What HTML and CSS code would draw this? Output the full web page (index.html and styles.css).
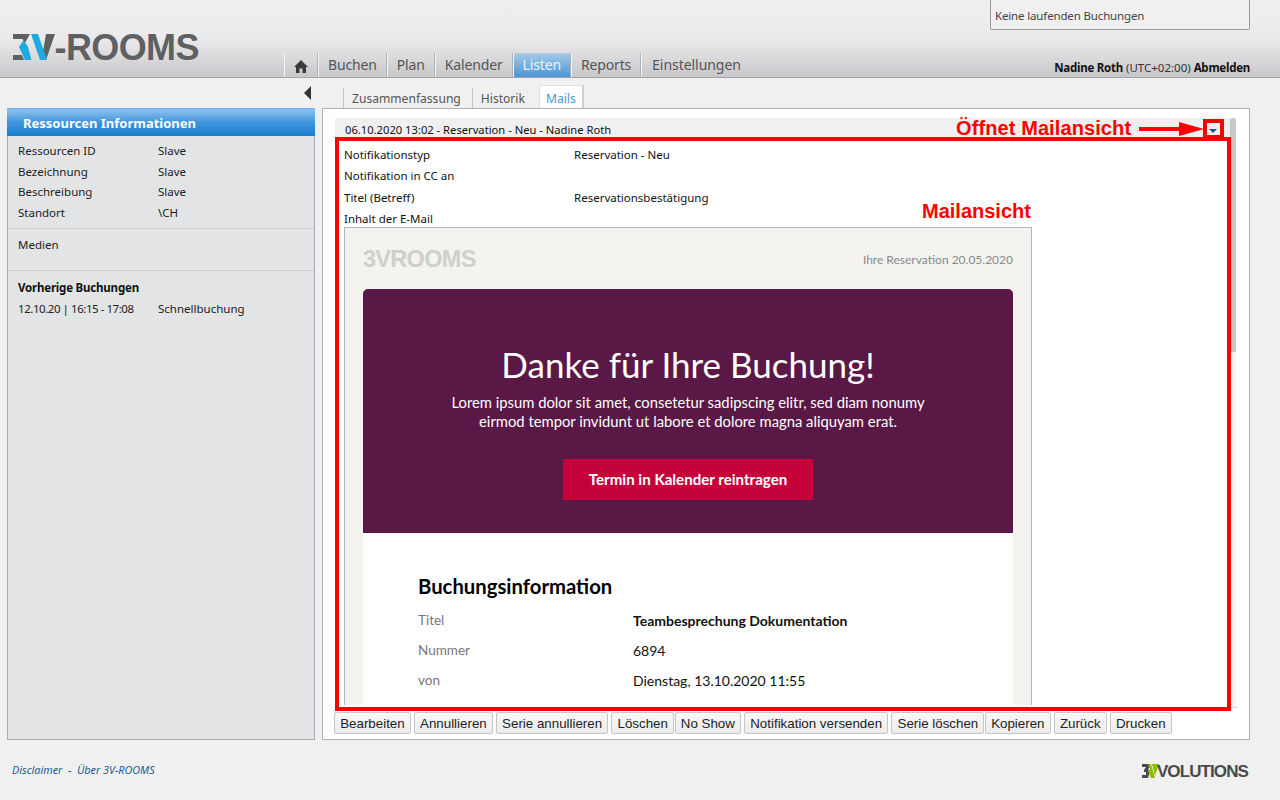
FILE: index.html
```html
<!DOCTYPE html>
<html lang="de">
<head>
    <meta charset="UTF-8">
    <title>3V-ROOMS</title>
    <link rel="stylesheet" href="styles.css">
</head>
<body>
<div class="header">
    <div class="running">Keine laufenden Buchungen</div>
    <div class="logo">
        <svg class="logo-mark" width="42" height="26" viewBox="0 0 42 26">
            <polygon points="0,0 17,0 12,9 9.5,5 0,5" fill="#5f6062"/>
            <polygon points="0,21 9,21 11,26 0,26" fill="#5f6062"/>
            <polygon points="10.5,6 15,13 18.5,26 12,26 6,13" fill="#1cabe2"/>
            <polygon points="33,0 42,0 33,26 28,26 31,12" fill="#5f6062"/>
            <polygon points="18,0 25,0 34,26 27,26" fill="#1cabe2"/>
        </svg>
        <span class="logo-text">-ROOMS</span>
    </div>
    <div class="nav">
        <a class="nav-tab home" href="#">
            <svg width="14" height="13" viewBox="0 0 14 13"><path d="M7 0 L14 7 H12 V13 H8.5 V8.5 H5.5 V13 H2 V7 H0 Z" fill="#3a3a3a"/></svg>
        </a>
        <a class="nav-tab" href="#">Buchen</a>
        <a class="nav-tab" href="#">Plan</a>
        <a class="nav-tab" href="#">Kalender</a>
        <a class="nav-tab active" href="#">Listen</a>
        <a class="nav-tab" href="#">Reports</a>
        <a class="nav-tab last" href="#">Einstellungen</a>
    </div>
    <div class="user"><b>Nadine Roth</b> (UTC+02:00) <b>Abmelden</b></div>
</div>

<div class="main">
    <div class="sidebar-col">
        <div class="collapse"><span class="collapse-arrow"></span></div>
        <div class="sidebar">
            <div class="sidebar-title">Ressourcen Informationen</div>
            <div class="side-section details">
                <div class="side-row"><span>Ressourcen ID</span><span>Slave</span></div>
                <div class="side-row"><span>Bezeichnung</span><span>Slave</span></div>
                <div class="side-row"><span>Beschreibung</span><span>Slave</span></div>
                <div class="side-row"><span>Standort</span><span>\CH</span></div>
            </div>
            <div class="side-section medien">
                <div class="side-row"><span>Medien</span></div>
            </div>
            <div class="side-section last">
                <div class="side-row"><b>Vorherige Buchungen</b></div>
                <div class="side-row date"><span>12.10.20 | 16:15 - 17:08</span><span>Schnellbuchung</span></div>
            </div>
        </div>
    </div>

    <div class="content-col">
        <div class="subtabs">
            <a class="subtab" href="#">Zusammenfassung</a>
            <a class="subtab" href="#">Historik</a>
            <a class="subtab active" href="#">Mails</a>
        </div>
        <div class="panel">
            <div class="scroll-area">
                <div class="mail-list">
                    <div class="mail-head">06.10.2020 13:02 - Reservation - Neu - Nadine Roth</div>
                    <div class="mail-fields">
                        <div class="field"><span>Notifikationstyp</span><span>Reservation - Neu</span></div>
                        <div class="field"><span>Notifikation in CC an</span></div>
                        <div class="field"><span>Titel (Betreff)</span><span>Reservationsbestätigung</span></div>
                        <div class="field"><span>Inhalt der E-Mail</span></div>
                    </div>
                    <div class="mail-frame">
                        <div class="mail-top">
                            <span class="mail-logo">3VROOMS</span>
                            <span class="mail-ref">Ihre Reservation 20.05.2020</span>
                        </div>
                        <div class="hero">
                            <h1>Danke für Ihre Buchung!</h1>
                            <p>Lorem ipsum dolor sit amet, consetetur sadipscing elitr, sed diam nonumy<br>eirmod tempor invidunt ut labore et dolore magna aliquyam erat.</p>
                            <a class="hero-btn" href="#">Termin in Kalender reintragen</a>
                        </div>
                        <div class="info">
                            <h2>Buchungsinformation</h2>
                            <div class="info-row"><span>Titel</span><b>Teambesprechung Dokumentation</b></div>
                            <div class="info-row"><span>Nummer</span><em>6894</em></div>
                            <div class="info-row"><span>von</span><em>Dienstag, 13.10.2020 11:55</em></div>
                        </div>
                    </div>
                </div>
                <div class="scrollbar"><div class="scroll-thumb"></div></div>
            </div>
            <div class="buttons">
                <button>Bearbeiten</button>
                <button>Annullieren</button>
                <button>Serie annullieren</button>
                <button class="tight">Löschen</button>
                <button>No Show</button>
                <button>Notifikation versenden</button>
                <button class="tight">Serie löschen</button>
                <button>Kopieren</button>
                <button>Zurück</button>
                <button>Drucken</button>
            </div>

            <!-- Anmerkungen aus der Dokumentation -->
            <div class="note-box"></div>
            <div class="note-toggle"></div>
            <div class="note note-open">Öffnet Mailansicht</div>
            <svg class="note-arrow" width="65" height="14" viewBox="0 0 65 14"><path d="M0 5 H40 V0 L65 7 L40 14 V9 H0 Z" fill="#f00"/></svg>
            <div class="note note-view">Mailansicht</div>
        </div>
    </div>
</div>

<div class="footer">
    <div class="footer-links"><a href="#">Disclaimer</a> &nbsp;-&nbsp; <a href="#">Über 3V-ROOMS</a></div>
    <div class="footer-logo">
        <svg width="20" height="14" viewBox="0 0 20 14">
            <polygon points="0,0 9,0 6,6 8,7 6,14 0,14 0,11 4,11 4,8 2,8 2,6 4,3 0,3" fill="#4a4a4c"/>
            <polygon points="6,0 9,0 13,14 9,14 6,7 8,5" fill="#8fbe00"/>
            <polygon points="10,0 17,0 13,12" fill="#8fbe00"/>
        </svg>
        <span>VOLUTIONS</span>
    </div>
</div>
</body>
</html>
```

FILE: styles.css
```css
* {
    box-sizing: border-box;
}

html, body {
    height: 800px;
    overflow: hidden;
}

body {
    margin: 0;
    font-family: "Noto Sans", "Open Sans", sans-serif;
    font-size: 11.5px;
    color: #222;
    background-color: #f0f0f0;
}

a {
    color: inherit;
    text-decoration: none;
}

.header {
    position: relative;
    height: 78px;
    display: flex;
    align-items: flex-end;
    padding: 0 30px 0 13px;
    border-bottom: 1px solid #a4a4a6;
    background: linear-gradient(#eeeef0 0, #ebebed 38px, #c8c8cc 77px);
}

.running {
    position: absolute;
    top: -1px;
    left: 990px;
    width: 260px;
    height: 31px;
    padding: 9px 0 0 4px;
    background-color: #f0f0f0;
    border: 1px solid #9a9a9e;
    border-top: 0;
    border-radius: 0 0 2px 2px;
    color: #444;
    letter-spacing: -0.15px;
}

.logo {
    width: 271px;
    height: 45px;
    display: flex;
    align-items: flex-start;
    align-self: flex-end;
}

.logo-mark {
    margin-top: 2px;
    flex-shrink: 0;
}

.logo-text {
    margin: 2px 0 0 -0.5px;
    font-family: "Liberation Sans", Arial, sans-serif;
    font-weight: bold;
    font-size: 36px;
    line-height: 28px;
    letter-spacing: -0.6px;
    color: #5f6062;
}

.nav {
    display: flex;
    height: 24px;
}

.nav-tab {
    display: flex;
    align-items: center;
    padding: 0 9px 2px;
    font-size: 14px;
    letter-spacing: -0.15px;
    color: #555;
    border-left: 1px solid #f4f4f4;
    border-right: 1px solid #b0b0b4;
}

.nav-tab.home {
    width: 34px;
    padding: 2px 0 0 9px;
}

.nav-tab.active {
    color: #eaf4fb;
    background: linear-gradient(#a6cbe8, #4a97d6);
}

.nav-tab.last {
    border-right: 0;
    padding-left: 10px;
    letter-spacing: -0.05px;
}

.user {
    margin-left: auto;
    margin-bottom: 2px;
    font-size: 11.5px;
    color: #333;
}

.user b {
    color: #111;
    letter-spacing: -0.25px;
}

.main {
    display: flex;
    height: 662px;
}

.sidebar-col {
    width: 322px;
    padding-left: 7px;
}

.collapse {
    height: 30px;
    display: flex;
    justify-content: flex-end;
    padding: 8px 11px 0 0;
}

.collapse-arrow {
    width: 0;
    height: 0;
    border-top: 7px solid transparent;
    border-bottom: 7px solid transparent;
    border-right: 7px solid #333;
}

.sidebar {
    width: 308px;
    height: 632px;
    background-color: #e3e4e6;
    border: 1px solid #a9abae;
    border-top: 0;
}

.sidebar-title {
    height: 28px;
    margin: 0 -1px;
    padding: 5px 0 0 16px;
    font-size: 13px;
    font-weight: bold;
    color: #fff;
    background: linear-gradient(#8fc3f0, #3f95dc 50%, #1a7ecf);
    border-top: 1px solid #6cb0e8;
}

.side-section {
    padding: 5px 10px 0;
    border-bottom: 1px solid #cacbcd;
}

.side-section.details {
    height: 93px;
}

.side-section.medien {
    height: 42px;
    padding-top: 6px;
}

.side-section.last {
    border-bottom: 0;
    padding-top: 7px;
}

.side-row {
    display: flex;
    height: 20.7px;
    line-height: 20px;
}

.side-row span:first-child {
    width: 140px;
}

.side-row b {
    color: #111;
    letter-spacing: -0.2px;
}

.date span:first-child {
    letter-spacing: -0.45px;
}

.date span:last-child {
    letter-spacing: 0;
}

.content-col {
    width: 928px;
}

.subtabs {
    height: 30px;
    display: flex;
    align-items: flex-end;
    padding-left: 21px;
}

.subtab {
    height: 20px;
    padding: 2px 11px 0 8px;
    font-size: 12.1px;
    color: #555;
    border-left: 1px solid #c4c4c6;
}

.subtab.active {
    height: 24px;
    padding: 4px 6px 0;
    margin-bottom: -1px;
    margin-left: 3px;
    position: relative;
    color: #4a97d6;
    background-color: #fff;
    border: 1px solid #e0e0e2;
    border-right: 2px solid #cfcfd1;
    border-bottom: 0;
}

.panel {
    position: relative;
    height: 632px;
    background-color: #fff;
    border: 1px solid #b0b0b2;
    padding: 9px 0 0 12px;
}

.scroll-area {
    display: flex;
    width: 903px;
    height: 590px;
    border-bottom: 1px solid #d8d8da;
}

.mail-list {
    width: 895px;
    height: 587px;
    overflow: hidden;
}

.mail-head {
    height: 20px;
    padding: 4px 0 0 10px;
    background-color: #f0f0f0;
    font-size: 11.2px;
    color: #111;
}

.mail-fields {
    height: 89px;
    padding: 6px 0 0 9px;
    color: #111;
}

.field {
    display: flex;
    height: 21.4px;
    line-height: 21px;
}

.field span:first-child {
    width: 230px;
}

.mail-frame {
    width: 688px;
    height: 520px;
    margin-left: 9px;
    padding: 0 18px;
    background-color: #f4f3f0;
    border: 1px solid #b4b4bc;
    border-bottom: 0;
    font-family: Lato, sans-serif;
    color: #111;
}

.mail-top {
    height: 61px;
    display: flex;
    justify-content: space-between;
    align-items: center;
    padding-top: 2px;
}

.mail-logo {
    font-family: "Liberation Sans", Arial, sans-serif;
    font-size: 23.5px;
    font-weight: bold;
    letter-spacing: -0.7px;
    color: #cfcfcc;
}

.mail-ref {
    font-size: 12px;
    color: #8a8a88;
}

.hero {
    height: 244px;
    padding-top: 52px;
    text-align: center;
    color: #fff;
    background-color: #5a1846;
    border-radius: 5px 5px 0 0;
}

.hero h1 {
    margin: 0;
    font-size: 35px;
    font-weight: normal;
    line-height: 46px;
}

.hero p {
    margin: 6px 0 0;
    font-size: 14.8px;
    line-height: 19px;
}

.hero-btn {
    display: inline-block;
    width: 250px;
    height: 41px;
    margin-top: 28px;
    line-height: 41px;
    font-size: 15.1px;
    font-weight: bold;
    background-color: #c6023a;
    border-radius: 1px;
}

.info {
    height: 300px;
    padding: 38px 55px 0;
    background-color: #fff;
}

.info h2 {
    margin: 0 0 5px;
    font-size: 20.3px;
    line-height: 30px;
    font-weight: bold;
    color: #000;
}

.info-row {
    display: flex;
    height: 30px;
    line-height: 30px;
    font-size: 14px;
}

.info-row span {
    width: 215px;
    line-height: 28px;
    font-size: 13.5px;
    color: #777;
}

.info-row em {
    font-style: normal;
}

.scrollbar {
    width: 6px;
    background-color: #f6f6f6;
}

.scroll-thumb {
    height: 234px;
    background-color: #c8c8ca;
    border-radius: 3px 3px 0 0;
}

.buttons {
    display: flex;
    padding-top: 4px;
    margin-left: -1px;
    gap: 3px;
}

.buttons button {
    height: 22px;
    padding: 0 5.2px;
    font-family: "Liberation Sans", Arial, sans-serif;
    font-size: 13.33px;
    color: #222;
    background: linear-gradient(#f8f8f8, #ececec);
    border: 1px solid #c6c6c6;
    border-radius: 2px;
}

.buttons .tight {
    margin-right: -2.5px;
}

/* rote Markierungen liegen ueber dem Inhalt */
.note-box {
    position: absolute;
    top: 28px;
    left: 12px;
    width: 896px;
    height: 574px;
    border: 4px solid #f00;
}

.note-toggle {
    position: absolute;
    top: 10px;
    left: 880px;
    width: 21px;
    height: 20px;
    border: 4px solid #f00;
    background-color: #f0f0f0;
}

.note-toggle::after {
    content: "";
    position: absolute;
    top: 6px;
    left: 2px;
    border-left: 4px solid transparent;
    border-right: 4px solid transparent;
    border-top: 4px solid #1c4f86;
}

.note {
    position: absolute;
    font-family: "Liberation Sans", Arial, sans-serif;
    font-weight: bold;
    font-size: 20px;
    line-height: 22px;
    color: #f00;
}

.note-open {
    top: 8px;
    left: 633px;
    letter-spacing: 0.1px;
}

.note-arrow {
    position: absolute;
    top: 13px;
    left: 816px;
}

.note-view {
    top: 91px;
    left: 599px;
}

.footer {
    height: 60px;
    display: flex;
    justify-content: space-between;
    padding: 22px 32px 0 12px;
}

.footer-links {
    font-size: 10.8px;
    font-style: italic;
    color: #1e5a96;
}

.footer-logo {
    display: flex;
    align-items: flex-start;
    padding-top: 2px;
    font-family: "Liberation Sans", Arial, sans-serif;
    font-size: 17px;
    font-weight: bold;
    letter-spacing: -0.9px;
    line-height: 15px;
    color: #4a4a4c;
}

.footer-logo span {
    margin-left: -5px;
}
```
